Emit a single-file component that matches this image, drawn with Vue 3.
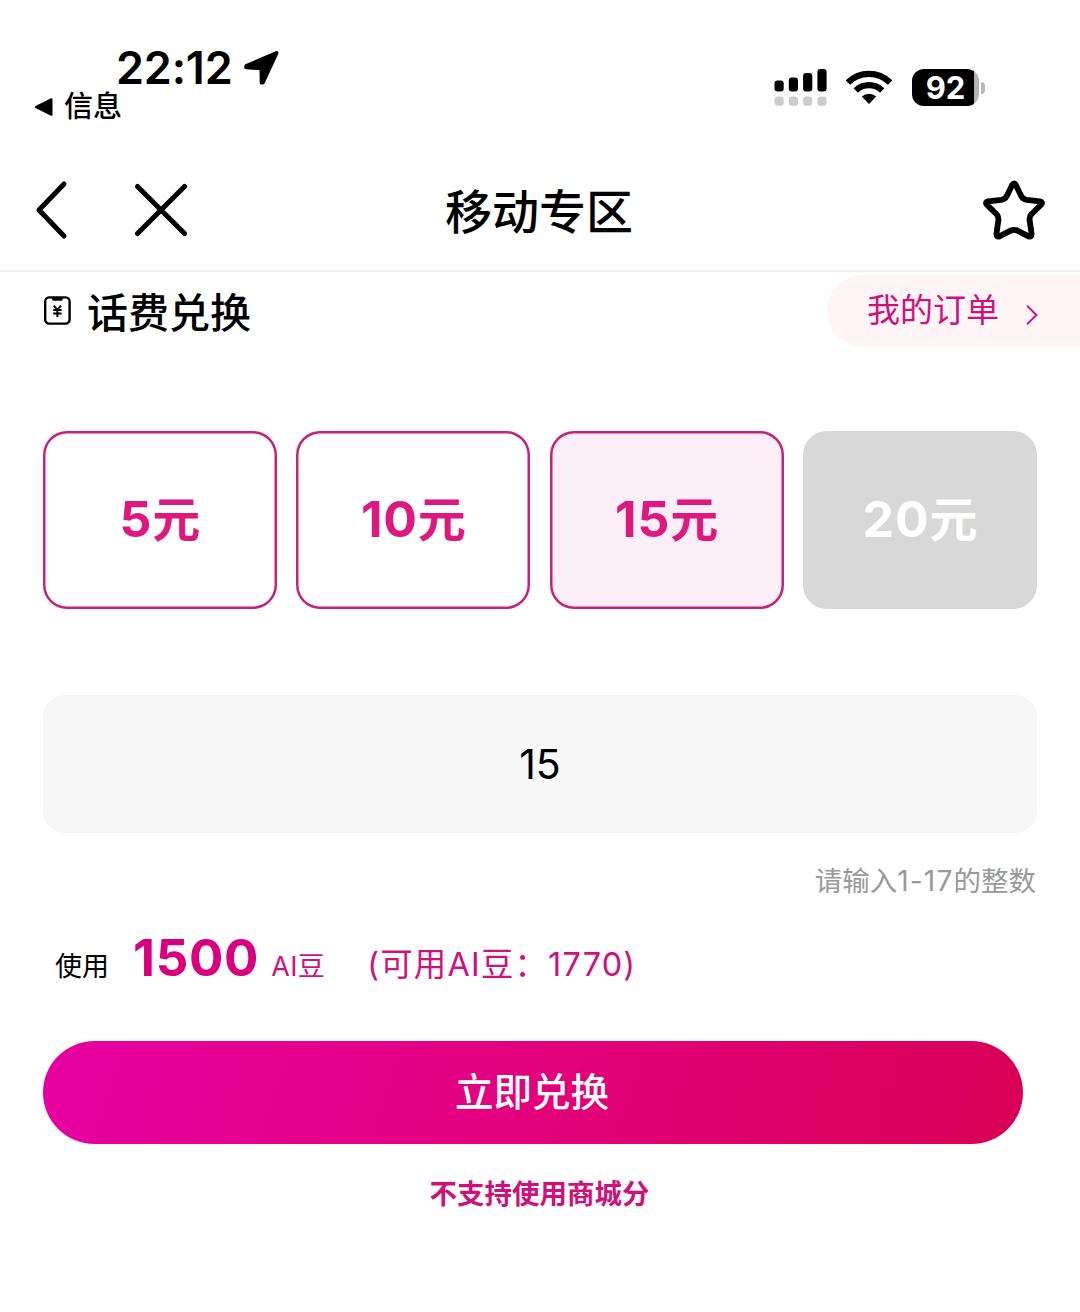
<script setup>
  import { ref, computed } from 'vue';

  const options = [
    { value: 5, disabled: false },
    { value: 10, disabled: false },
    { value: 15, disabled: false },
    { value: 20, disabled: true },
  ];

  const balance = 1770;
  const rate = 100; // AI beans for one yuan
  const amount = ref(15);

  const max = computed(() => Math.floor(balance / rate));
  const cost = computed(() => (Number(amount.value) || 0) * rate);

  const pick = (option) => {
    if (!option.disabled) {
      amount.value = option.value;
    }
  };
</script>

<template>
  <div class="page">
    <!-- Status bar -->
    <div class="status">
      <div class="status-left">
        <div class="time-row">
          <span class="time">22:12</span>
          <svg class="location" width="38" height="38" viewBox="0 0 38 38">
            <path d="M3.2 17 L33.6 4 L19.8 33.6 L18.6 33.6 L18.4 19.4 L3.2 18.4 Z" stroke="#000" stroke-width="3.8" stroke-linejoin="round" />
          </svg>
        </div>
        <div class="back-app">
          <svg width="20" height="20" viewBox="0 0 20 20">
            <path d="M2 10 L17.4 2.3 V17.7 Z" stroke="#000" stroke-width="2.2" stroke-linejoin="round" />
          </svg>
          <span>信息</span>
        </div>
      </div>
      <div class="status-right">
        <svg width="54" height="38" viewBox="0 0 54 38">
          <rect x="0.5" y="11.6" width="9.2" height="11" rx="3" />
          <rect x="14.8" y="8.6" width="9.2" height="14" rx="3" />
          <rect x="29.1" y="4" width="9.2" height="18.6" rx="3" />
          <rect x="43.4" y="0" width="9.2" height="22.6" rx="3" />
          <g fill="#ccc">
            <rect x="0.5" y="27.6" width="9.2" height="9.2" rx="3.4" />
            <rect x="14.8" y="27.6" width="9.2" height="9.2" rx="3.4" />
            <rect x="29.1" y="27.6" width="9.2" height="9.2" rx="3.4" />
            <rect x="43.4" y="27.6" width="9.2" height="9.2" rx="3.4" />
          </g>
        </svg>
        <svg class="wifi" width="46" height="34" viewBox="0 0 46 34">
          <g fill="none" stroke="#000" stroke-width="6.2">
            <path d="M1.9 12.6 A30 30 0 0 1 44.1 12.6" />
            <path d="M9.8 20.4 A19 19 0 0 1 36.2 20.4" />
          </g>
          <path d="M23 34 L15.8 26.6 A10.6 10.6 0 0 1 30.2 26.6 Z" />
        </svg>
        <div class="battery">
          <div class="battery-body">92</div>
          <div class="battery-tip"></div>
        </div>
      </div>
    </div>

    <!-- Navigation -->
    <header class="nav">
      <div class="nav-side">
        <svg width="34" height="60" viewBox="0 0 34 60">
          <path class="line" d="M29 4 L4 30 L29 56" />
        </svg>
        <svg class="close" width="54" height="54" viewBox="0 0 54 54">
          <path class="line" d="M3.5 3.5 L50.5 50.5 M50.5 3.5 L3.5 50.5" />
        </svg>
      </div>
      <h1>移动专区</h1>
      <div class="nav-side nav-end">
        <svg width="64" height="64" viewBox="0 0 64 64">
          <path class="star" d="M30.3 6.8 Q32 4.2 33.7 6.8 L39.3 18.2 Q41 21.4 44.6 21.9 L58 23.4 Q61.2 24.1 59.2 26.6 L49.4 36.2 Q47.2 38.6 47.6 42 L49.6 56 Q49.6 59.4 46.6 58.4 L35.4 52.6 Q32 51 28.6 52.6 L17.4 58.4 Q14.4 59.4 14.4 56 L16.4 42 Q16.8 38.6 14.6 36.2 L4.8 26.6 Q2.8 24.1 6 23.4 L19.4 21.9 Q23 21.4 24.7 18.2 Z" />
        </svg>
      </div>
    </header>

    <!-- Section title -->
    <div class="section-head">
      <div class="section-title">
        <svg width="28" height="30" viewBox="0 0 28 30">
          <rect x="2.2" y="1.4" width="24.4" height="26.2" rx="4" fill="none" stroke="#000" stroke-width="2.4" />
          <path d="M8.2 1.2 H20.6 L19 4.8 H9.8 Z" />
          <path d="M10.8 9.6 L14.4 13.8 L18 9.6 M10.2 14.1 H18.6 M10.2 17.5 H18.6 M14.4 13.8 V21" fill="none" stroke="#000" stroke-width="2" />
        </svg>
        <h2>话费兑换</h2>
      </div>
      <a class="orders">
        <span>我的订单</span>
        <svg width="14" height="22" viewBox="0 0 14 22">
          <path d="M2 1.6 L11.4 11 L2 20.4" fill="none" stroke="#d0107c" stroke-width="2" />
        </svg>
      </a>
    </div>

    <main>
      <div class="options">
        <button
          v-for="option in options"
          :key="option.value"
          class="option"
          :class="{ active: option.value === Number(amount), disabled: option.disabled }"
          @click="pick(option)"
        ><span class="number">{{ option.value }}</span>元</button>
      </div>

      <input v-model="amount" class="amount" type="text" inputmode="numeric">
      <p class="hint">请输入<span class="range">1-{{ max }}</span>的整数</p>

      <div class="usage">
        <span class="usage-label">使用</span>
        <span class="usage-cost">{{ cost }}</span>
        <span class="usage-unit">AI豆</span>
        <span class="usage-balance">(可用AI豆：{{ balance }})</span>
      </div>

      <button class="submit">立即兑换</button>
      <p class="note">不支持使用商城分</p>
    </main>
  </div>
</template>

<style>
body {
  margin: 0;
  background: #fff;
}
</style>

<style scoped>
.page {
  width: 1080px;
  height: 1312px;
  overflow: hidden;
  background: #fff;
  color: #000;
  font-family: Inter, "Noto Sans CJK SC", sans-serif;
}

svg {
  display: block;
  flex: none;
}

h1, h2, p {
  margin: 0;
}

button, input {
  border: none;
  padding: 0;
  font-family: inherit;
}

/* Status bar */
.status {
  box-sizing: border-box;
  height: 150px;
  display: flex;
  justify-content: space-between;
  padding: 42px 95px 0 34px;
}

.time-row {
  display: flex;
  height: 51px;
  padding-left: 82px;
}

.time {
  font-size: 45px;
  font-weight: 600;
  line-height: 51px;
  letter-spacing: -0.2px;
}

.location {
  margin: 7px 0 0 10px;
}

.back-app {
  display: flex;
  align-items: center;
  gap: 10px;
  height: 28px;
  font-size: 29px;
  line-height: 28px;
  font-weight: 500;
}

.status-right {
  display: flex;
  padding-top: 27px;
}

.wifi {
  margin: 1px 20px 0 18px;
}

.battery {
  display: flex;
  align-items: center;
  gap: 2px;
  height: 37px;
}

.battery-body {
  width: 67px;
  height: 37px;
  border-radius: 12px;
  background: linear-gradient(90deg, #000 0 61.5px, #b3b3b3 61.5px);
  color: #fff;
  font-size: 31px;
  font-weight: 700;
  line-height: 38px;
  text-align: center;
}

.battery-tip {
  width: 4px;
  height: 12px;
  border-radius: 0 4px 4px 0;
  background: #b8b8b8;
}

/* Navigation */
.nav {
  box-sizing: border-box;
  height: 122px;
  display: flex;
  align-items: center;
  padding: 0 34px 0 35px;
  border-bottom: 2px solid #f0f0f0;
}

.nav-side {
  flex: 1;
  display: flex;
  align-items: center;
}

.close {
  margin-left: 65px;
}

.nav-end {
  justify-content: flex-end;
}

.line {
  fill: none;
  stroke: #000;
  stroke-width: 5;
  stroke-linecap: round;
  stroke-linejoin: round;
}

.star {
  fill: none;
  stroke: #000;
  stroke-width: 5.8;
  stroke-linejoin: round;
}

h1 {
  padding: 3px 3px 0 0;
  font-size: 47px;
  font-weight: 500;
  line-height: 60px;
}

/* Section title */
.section-head {
  display: flex;
  justify-content: space-between;
  padding: 3px 0 0 43px;
}

.section-title {
  display: flex;
  align-items: center;
  gap: 16px;
  height: 72px;
}

h2 {
  padding-top: 3px;
  font-size: 41px;
  font-weight: 500;
  line-height: 72px;
}

.orders {
  box-sizing: border-box;
  width: 253px;
  height: 72px;
  display: flex;
  align-items: center;
  gap: 26px;
  padding-left: 40px;
  border-radius: 36px 0 0 36px;
  background: #fff4f6;
  color: #d0107c;
  font-size: 33px;
}

.orders span {
  padding-bottom: 2px;
  line-height: 64px;
}

.orders svg {
  margin-top: 7px;
}

main {
  padding: 84px 43px 0;
}

/* Amount cards */
.options {
  display: grid;
  grid-template-columns: repeat(4, 1fr);
  gap: 19.4px;
}

.option {
  height: 178px;
  padding-bottom: 8px;
  border-radius: 24px;
  background: #fff;
  box-shadow: inset 0 0 0 2.5px #c72279;
  color: #dd197f;
  font-size: 48px;
  font-weight: 700;
}

.number {
  font-size: 50px;
  letter-spacing: 0.8px;
}

.option.active {
  background: #fceff7;
}

.option.disabled {
  background: #d8d8d8;
  box-shadow: none;
  color: #fff;
}

.amount {
  display: block;
  width: 100%;
  height: 138px;
  margin-top: 86px;
  border-radius: 22px;
  background: #f7f7f7;
  color: #000;
  font-size: 41px;
  text-align: center;
  outline: none;
}

.hint {
  margin-top: 28px;
  padding-right: 1px;
  color: #999;
  font-size: 27.5px;
  line-height: 40px;
  text-align: right;
}

.range {
  font-size: 28px;
  letter-spacing: 1.2px;
}

/* Cost line */
.usage {
  display: flex;
  align-items: baseline;
  height: 60px;
  margin-top: 27px;
  padding-left: 12px;
  line-height: 60px;
  color: #d0107c;
}

.usage-label {
  color: #000;
  font-size: 27px;
}

.usage-cost {
  margin-left: 24px;
  color: #d9007d;
  font-size: 51px;
  font-weight: 700;
  letter-spacing: 0.7px;
}

.usage-unit {
  margin-left: 12px;
  font-size: 27px;
  letter-spacing: 0.4px;
}

.usage-balance {
  margin-left: 42px;
  font-size: 32.4px;
  letter-spacing: 1.2px;
}

.submit {
  display: block;
  width: 980px;
  height: 103px;
  margin-top: 53px;
  padding: 0 2px 7px 0;
  border-radius: 52px;
  background: linear-gradient(110deg, #e6009e 5%, #e3007c 50%, #d80056 98%);
  color: #fff;
  font-size: 38.5px;
  font-weight: 500;
}

.note {
  margin-top: 30px;
  padding-right: 1px;
  color: #cf107a;
  font-size: 27.5px;
  font-weight: 700;
  line-height: 40px;
  text-align: center;
}
</style>
